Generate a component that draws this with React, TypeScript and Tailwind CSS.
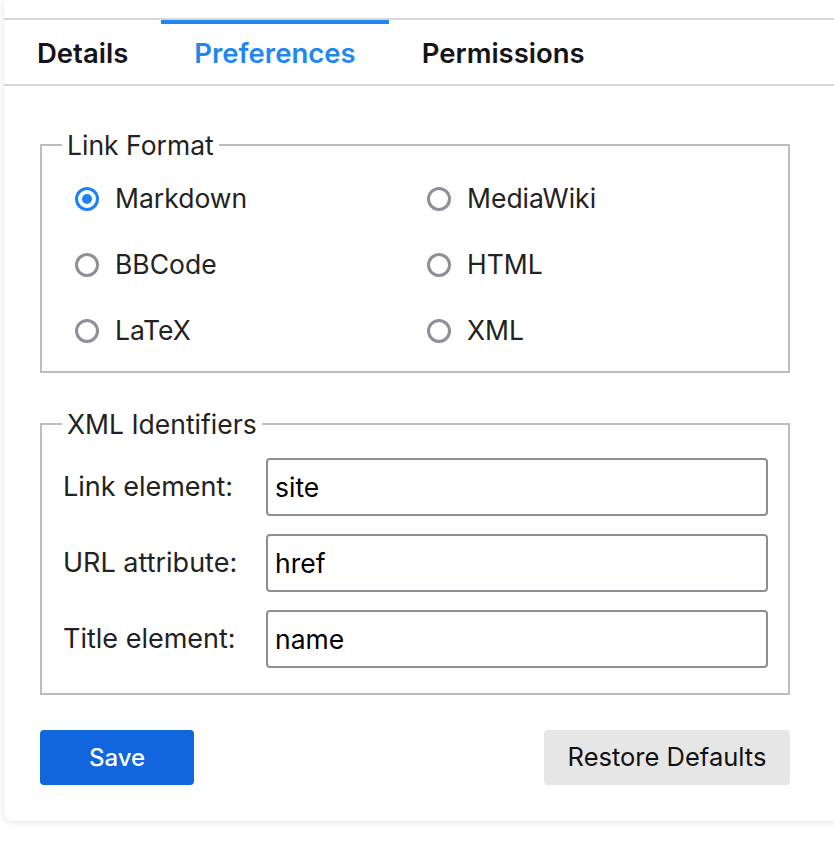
import { useState } from 'react'

const formats = ['Markdown', 'MediaWiki', 'BBCode', 'HTML', 'LaTeX', 'XML']

const fields = [
  { label: 'Link element:', value: 'site' },
  { label: 'URL attribute:', value: 'href' },
  { label: 'Title element:', value: 'name' },
]

function Radio({ checked }: { checked: boolean }) {
  return checked ? (
    <span className="flex h-[24px] w-[24px] shrink-0 items-center justify-center rounded-full border-[3px] border-[#1a84f4]">
      <span className="h-[10px] w-[10px] rounded-full bg-[#1a84f4]" />
    </span>
  ) : (
    <span className="h-[24px] w-[24px] shrink-0 rounded-full border-[3px] border-[#8f8f98]" />
  )
}

export default function App() {
  const [tab, setTab] = useState('Preferences')
  const [format, setFormat] = useState('Markdown')

  return (
    <div className="h-[848px] w-[834px] overflow-hidden bg-white font-['Inter','Liberation_Sans',sans-serif] text-[#222]">
      <div className="ml-[4px] w-[840px] rounded-b-[8px] bg-white pt-[18px] pb-[36px] shadow-[0_1px_6px_rgba(0,0,0,0.12)]">
        <div className="flex border-y-2 border-[#d6d6da]">
          {['Details', 'Preferences', 'Permissions'].map((t) => (
            <button
              key={t}
              type="button"
              onClick={() => setTab(t)}
              className={
                t === tab
                  ? 'border-t-4 border-[#1e88f0] px-[33px] pt-[13px] pb-[15px] text-[27.5px] leading-[32px] font-semibold text-[#1e88f0]'
                  : 'border-t-4 border-transparent px-[33px] pt-[13px] pb-[15px] text-[27.5px] leading-[32px] font-semibold text-[#141418]'
              }
            >
              {t}
            </button>
          ))}
        </div>

        <div className="w-[786px] pl-[36px]">
          <fieldset className="mt-[43px] border-2 border-[#bdbdbd] pl-[20px] pb-[20px]">
            <legend className="px-[5px] text-[26.5px] leading-[32px]">Link Format</legend>
            <div className="mt-[18px] grid grid-cols-[352px_1fr] gap-y-[26px] pl-[13px]">
              {formats.map((f) => (
                <label
                  key={f}
                  className="flex h-[40px] cursor-pointer items-center gap-[16px] text-[26.5px]"
                  onClick={() => setFormat(f)}
                >
                  <Radio checked={format === f} />
                  {f}
                </label>
              ))}
            </div>
          </fieldset>

          <fieldset className="mt-[35px] border-2 border-[#bdbdbd] pr-[20px] pb-[25px] pl-[20px]">
            <legend className="px-[5px] text-[26.5px] leading-[32px]">XML Identifiers</legend>
            <div className="mt-[18px] flex flex-col gap-[18px]">
              {fields.map((f) => (
                <div key={f.label} className="flex items-center">
                  <span className="w-[204px] shrink-0 pl-[1px] text-[27px]">{f.label}</span>
                  <input
                    defaultValue={f.value}
                    className="h-[58px] min-w-0 flex-1 rounded-[4px] border-2 border-[#8e8e96] px-[7px] text-[26.5px] text-black outline-none"
                  />
                </div>
              ))}
            </div>
          </fieldset>

          <div className="mt-[35px] flex justify-between">
            <button
              type="button"
              className="h-[55px] w-[154px] rounded-[4px] bg-[#1166dd] text-[24px] font-medium text-white"
            >
              Save
            </button>
            <button
              type="button"
              className="h-[55px] w-[246px] rounded-[4px] bg-[#e6e6e6] text-[25.5px] text-[#111]"
            >
              Restore Defaults
            </button>
          </div>
        </div>
      </div>
    </div>
  )
}
